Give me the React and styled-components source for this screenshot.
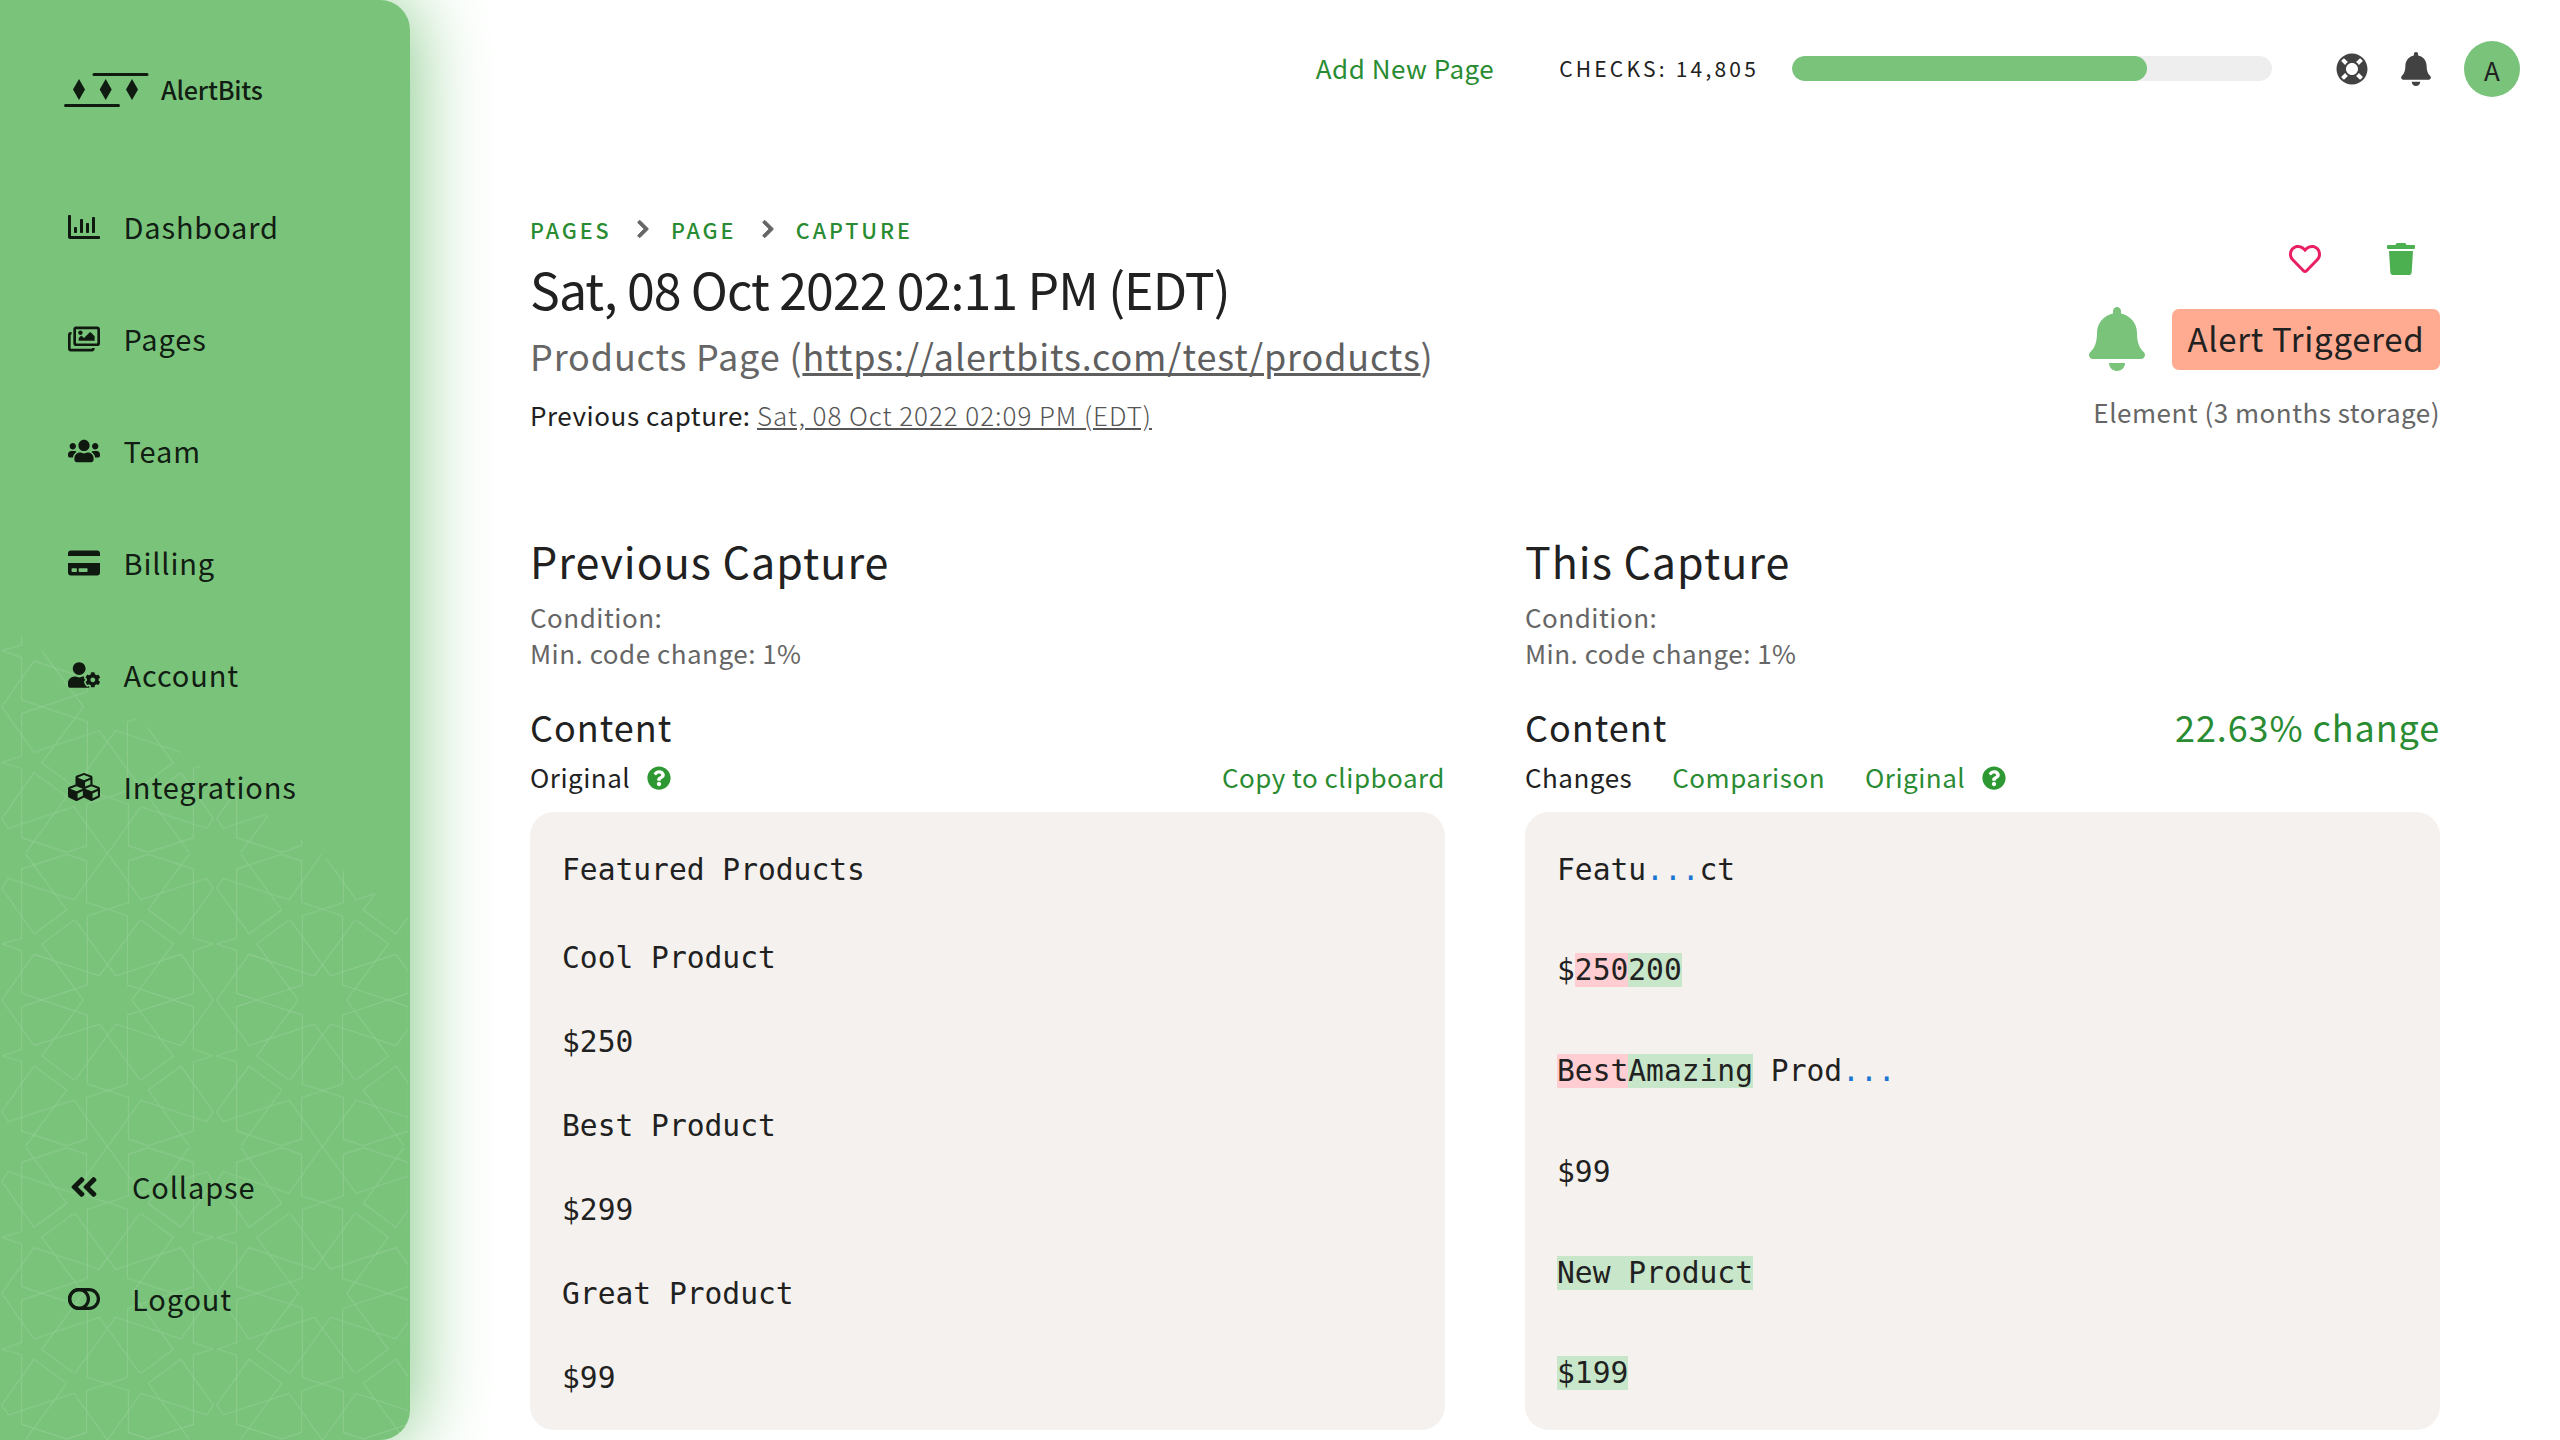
import React from "react";
import styled, { createGlobalStyle } from "styled-components";
import {
  FaRegChartBar, FaRegImages, FaUsers, FaCreditCard, FaUserCog, FaCubes, FaAngleDoubleLeft,
  FaLifeRing, FaBell, FaChevronRight, FaRegHeart, FaTrash, FaQuestionCircle,
} from "react-icons/fa";

const SANS = `"Noto Sans CJK SC", "Noto Sans", sans-serif`;
const GREEN = "#79c37b";
const LINK = "#2a8c32";

const Global = createGlobalStyle`
  html, body { margin: 0; padding: 0; background: #fff; }
  body { font-family: ${SANS}; color: #212121; }
  * { box-sizing: border-box; }
`;

const Shell = styled.div`display: flex; width: 2560px; height: 1440px; overflow: hidden;`;

const Sidebar = styled.aside`
  position: relative; flex: 0 0 410px; height: 1440px; display: flex; flex-direction: column;
  padding: 72px 0 86px 68px; background: ${GREEN}; border-radius: 0 30px 30px 0;
  box-shadow: 0 0 80px ${GREEN}; color: rgba(0,0,0,.87); z-index: 1;
`;
const PatternLayer = styled.svg`
  position: absolute; left: 0; top: 0; width: 408px; height: 1440px; pointer-events: none;
  clip-path: polygon(0 620px, 408px 918px, 408px 1440px, 0 1440px);
`;
const Logo = styled.div`position: relative; display: flex; align-items: center; gap: 11px; height: 35px; margin-left: -4px;`;
const LogoText = styled.span`font-size: 25.2px; font-weight: 500; line-height: 35px; letter-spacing: -.2px;`;
const Nav = styled.nav`position: relative; display: flex; flex-direction: column; margin-top: 62.5px;`;
const NavItem = styled.a`
  display: flex; align-items: center; gap: ${p => p.$gap || 23.5}px; height: 112px;
  font-size: 29px; letter-spacing: .85px;
`;
const NavIcon = styled.span`display: flex; justify-content: center; align-items: center; width: 32px; font-size: 32px; padding-top: 2px;`;
const NavFoot = styled.div`position: relative; display: flex; flex-direction: column; margin-top: auto;`;

const Main = styled.main`flex: 1; display: flex; flex-direction: column; min-width: 0;`;
const TopBar = styled.header`display: flex; justify-content: flex-end; align-items: center; height: 138px; padding-right: 40px;`;
const AddLink = styled.a`font-size: 26px; letter-spacing: .5px; color: ${LINK}; margin-right: 65px; margin-top: -3px;`;
const Checks = styled.span`font-size: 21px; letter-spacing: 3.2px; margin-right: 33px; margin-top: -3px; white-space: nowrap;`;
const Track = styled.div`width: 480px; height: 25px; border-radius: 13px; background: #eee; overflow: hidden; margin-right: 63.5px; margin-top: -1px;`;
const Fill = styled.div`height: 100%; background: ${GREEN}; border-radius: 13px;`;
const TopIcon = styled.span`display: flex; font-size: ${p => p.$size}px; color: #424242; margin-right: ${p => p.$mr}px; margin-top: -1px;`;
const Avatar = styled.div`
  width: 56px; height: 56px; border-radius: 50%; background: ${GREEN}; display: flex;
  align-items: center; justify-content: center; font-size: 26px; color: #212121;
`;

const Content = styled.div`padding: 0 120px;`;
const Header = styled.section`display: flex; justify-content: space-between; align-items: flex-start; padding-top: 75px;`;
const Crumbs = styled.div`display: flex; align-items: center; height: 32px; color: ${LINK}; font-size: 21.5px; font-weight: 500; letter-spacing: 2.9px;`;
const CrumbSep = styled.span`
  display: flex; color: #666; font-size: 20px; margin: 0 18px 0 21.5px;
  svg { stroke: currentColor; stroke-width: 24; }
`;
const Title = styled.h1`margin: 8px 0 0; font-size: 50px; line-height: 70px; font-weight: 400; letter-spacing: -.92px;`;
const Subtitle = styled.div`margin-top: 9px; font-size: 36px; line-height: 46px; color: #666; letter-spacing: .85px;`;
const Underlined = styled.a`text-decoration: underline; color: #5f5f5f;`;
const PrevLine = styled.div`margin-top: 19px; font-size: 26px; line-height: 36px; letter-spacing: .55px;`;
const PrevLink = styled.a`text-decoration: underline; color: #555; font-weight: 300; letter-spacing: .95px;`;

const Status = styled.div`display: flex; flex-direction: column; align-items: flex-end;`;
const StatusIcons = styled.div`display: flex; align-items: center; gap: 64px; height: 32px; margin-top: 29.5px; padding-right: 23px;`;
const HeartIcon = styled.span`display: flex; color: #e91e63; font-size: 32px;`;
const TrashIcon = styled.span`display: flex; color: #4caf50; font-size: 32px;`;
const AlertRow = styled.div`display: flex; align-items: center; gap: 23px; margin-top: 32.5px;`;
const AlertBell = styled.span`display: flex; color: ${GREEN}; font-size: 64px;`;
const AlertBadge = styled.div`
  width: 268px; height: 61px; border-radius: 7px; background: #ffab91; display: flex; align-items: center;
  justify-content: center; font-size: 33px; letter-spacing: .7px; color: #212121; padding-bottom: 2px;
`;
const Storage = styled.div`margin-top: 23px; font-size: 26px; line-height: 36px; color: #666; letter-spacing: .5px;`;

const Columns = styled.div`display: grid; grid-template-columns: 915px 915px; gap: 80px; margin-top: 100px;`;
const Col = styled.section`display: flex; flex-direction: column;`;
const ColTitle = styled.h2`margin: 0; font-size: 43px; line-height: 54px; font-weight: 400; letter-spacing: 1px;`;
const Cond = styled.div`margin-top: 12px; font-size: 26px; line-height: 36px; color: #666; letter-spacing: .5px;`;
const ContentRow = styled.div`display: flex; justify-content: space-between; align-items: center; margin-top: 32px; height: 46px;`;
const ContentHead = styled.h3`margin: 0; font-size: 36px; font-weight: 400; letter-spacing: 1px;`;
const ChangePct = styled.span`font-size: 36px; color: ${LINK}; letter-spacing: .9px;`;
const TabsRow = styled.div`display: flex; align-items: center; height: 36px; margin-top: 9px; font-size: 26px; letter-spacing: .5px; white-space: nowrap;`;
const TabText = styled.span`margin-right: ${p => p.$mr || 0}px;`;
const TabLink = styled.a`color: ${LINK}; margin-right: ${p => p.$mr || 0}px; margin-left: ${p => (p.$push ? "auto" : 0)};`;
const Help = styled.span`display: flex; color: #2e9833; font-size: 24px; margin-top: 3px;`;
const CodeBox = styled.div`
  margin-top: 17.5px; height: 618px; padding: 41px 32px; background: #f5f1ee; border-radius: 24px;
  font-family: "DejaVu Sans Mono", "Liberation Mono", monospace; font-size: 29.6px; line-height: 35px; color: #212121;
`;
const PlainLine = styled.div`height: 35px; white-space: pre; margin-bottom: 49.2px; &:first-child { margin-bottom: 53px; }`;
const DiffLine = styled.div`height: 35px; white-space: pre; margin-bottom: 65.8px;`;
const Ins = styled.span`background: #c8e6c9;`;
const Del = styled.span`background: #ffcdd2;`;
const Dots = styled.span`color: #1976d2;`;

const LogoMark = () => (
  <svg width="86" height="36" viewBox="0 0 86 36">
    <path d="M30 2.5h53M1.500 33.500h53" stroke="#0f1b10" strokeWidth="3" strokeLinecap="round" fill="none" />
    <path d="M15 7l6 10.500L15 28l-6-10.500zM41.700 7l6 10.500L41.700 28l-6-10.500zM68 7l6 10.500L68 28l-6-10.500z" fill="#0f1b10" />
  </svg>
);

const LogoutIcon = () => (
  <svg width="32" height="22" viewBox="0 0 32 22" fill="none" stroke="#101a10" strokeWidth="3.2">
    <rect x="1.600" y="1.600" width="28.800" height="18.800" rx="9.400" />
    <circle cx="11" cy="11" r="9.400" />
  </svg>
);

// One quarter of the star lattice, mirrored into a full tile.
const QUARTER = [
  [[5,168],[65,148],[65,20],[125,0],[262,45],[262,252],[322,272],[260,292],[260,417],[200,437]],
  [[5,168],[65,185],[65,393],[200,437]],
  [[5,0],[102,137],[298,72],[420,240]],
  [[250,0],[125,168],[222,240]],
  [[102,198],[200,270],[78,437]],
  [[102,198],[5,335],[25,365],[222,300],[322,440]],
];
const TILE_W = 645, TILE_H = 880;
const tilePath = [[0,0],[1,0],[0,1],[1,1]].flatMap(([mx, my]) => QUARTER.map(line =>
  "M" + line.map(([x, y]) => `${mx ? TILE_W - x : x} ${my ? TILE_H - y : y}`).join("L")
)).join("");

const Lattice = () => (
  <PatternLayer viewBox="0 0 408 1440">
    <defs>
      <pattern id="lattice" patternUnits="userSpaceOnUse" width={TILE_W / 3} height={TILE_H / 3} x="0" y="1000">
        <path d={tilePath} transform="scale(.3333)" fill="none" stroke="#fff" strokeOpacity=".15" strokeWidth="3" />
      </pattern>
    </defs>
    <rect width="408" height="1440" fill="url(#lattice)" />
  </PatternLayer>
);

const NAV = [
  ["Dashboard", <FaRegChartBar />], ["Pages", <FaRegImages />], ["Team", <FaUsers />],
  ["Billing", <FaCreditCard />], ["Account", <FaUserCog />], ["Integrations", <FaCubes />],
];

const Capture = ({ title, head, tabs, children }) => (
  <Col>
    <ColTitle>{title}</ColTitle>
    <Cond>Condition:<br />Min. code change: 1%</Cond>
    <ContentRow>{head}</ContentRow>
    <TabsRow>{tabs}</TabsRow>
    <CodeBox>{children}</CodeBox>
  </Col>
);

export default function App() {
  return (
    <Shell>
      <Global />
      <Sidebar>
        <Lattice />
        <Logo><LogoMark /><LogoText>AlertBits</LogoText></Logo>
        <Nav>
          {NAV.map(([label, icon]) => (
            <NavItem key={label}><NavIcon>{icon}</NavIcon>{label}</NavItem>
          ))}
        </Nav>
        <NavFoot>
          <NavItem $gap={32}><NavIcon><FaAngleDoubleLeft /></NavIcon>Collapse</NavItem>
          <NavItem $gap={32}><NavIcon><LogoutIcon /></NavIcon>Logout</NavItem>
        </NavFoot>
      </Sidebar>
      <Main>
        <TopBar>
          <AddLink>Add New Page</AddLink>
          <Checks>CHECKS: 14,805</Checks>
          <Track><Fill style={{ width: `${(355 / 480) * 100}%` }} /></Track>
          <TopIcon $size={32} $mr={31}><FaLifeRing /></TopIcon>
          <TopIcon $size={34} $mr={31.5}><FaBell /></TopIcon>
          <Avatar>A</Avatar>
        </TopBar>
        <Content>
          <Header>
            <div>
              <Crumbs>
                PAGES<CrumbSep><FaChevronRight /></CrumbSep>PAGE<CrumbSep><FaChevronRight /></CrumbSep>CAPTURE
              </Crumbs>
              <Title>Sat, 08 Oct 2022 02:11 PM (EDT)</Title>
              <Subtitle>Products Page (<Underlined>https://alertbits.com/test/products</Underlined>)</Subtitle>
              <PrevLine>Previous capture: <PrevLink>Sat, 08 Oct 2022 02:09 PM (EDT)</PrevLink></PrevLine>
            </div>
            <Status>
              <StatusIcons>
                <HeartIcon><FaRegHeart /></HeartIcon>
                <TrashIcon><FaTrash /></TrashIcon>
              </StatusIcons>
              <AlertRow>
                <AlertBell><FaBell /></AlertBell>
                <AlertBadge>Alert Triggered</AlertBadge>
              </AlertRow>
              <Storage>Element (3 months storage)</Storage>
            </Status>
          </Header>
          <Columns>
            <Capture
              title="Previous Capture"
              head={<ContentHead>Content</ContentHead>}
              tabs={<>
                <TabText $mr={17}>Original</TabText>
                <Help><FaQuestionCircle /></Help>
                <TabLink $push>Copy to clipboard</TabLink>
              </>}
            >
              {["Featured Products", "Cool Product", "$250", "Best Product", "$299", "Great Product", "$99"].map(t => (
                <PlainLine key={t}>{t}</PlainLine>
              ))}
            </Capture>
            <Capture
              title="This Capture"
              head={<><ContentHead>Content</ContentHead><ChangePct>22.63% change</ChangePct></>}
              tabs={<>
                <TabText $mr={40}>Changes</TabText>
                <TabLink $mr={40}>Comparison</TabLink>
                <TabLink $mr={17}>Original</TabLink>
                <Help><FaQuestionCircle /></Help>
              </>}
            >
              <DiffLine>Featu<Dots>...</Dots>ct</DiffLine>
              <DiffLine>$<Del>250</Del><Ins>200</Ins></DiffLine>
              <DiffLine><Del>Best</Del><Ins>Amazing</Ins> Prod<Dots>...</Dots></DiffLine>
              <DiffLine>$99</DiffLine>
              <DiffLine><Ins>New Product</Ins></DiffLine>
              <DiffLine><Ins>$199</Ins></DiffLine>
            </Capture>
          </Columns>
        </Content>
      </Main>
    </Shell>
  );
}
